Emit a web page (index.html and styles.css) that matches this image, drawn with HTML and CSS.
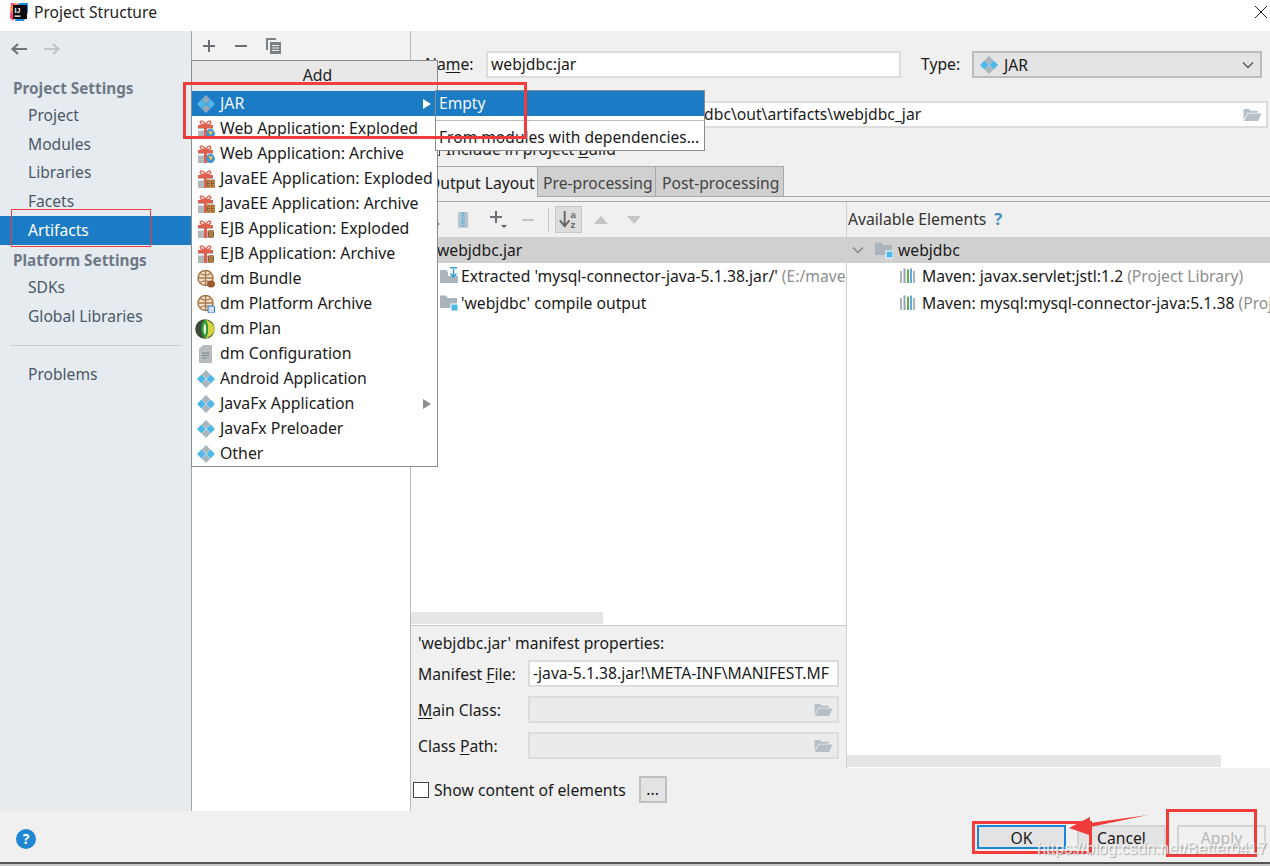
FILE: index.html
```html
<!DOCTYPE html>
<html lang="en">
<head>
<meta charset="utf-8">
<title>Project Structure</title>
<link rel="stylesheet" href="styles.css">
</head>
<body>
<svg class="sprite" aria-hidden="true">
  <symbol id="i-diamond" viewBox="0 0 18 18">
    <path d="M9 0l4.400 4.400L9 8.800 4.600 4.400z" fill="#a9b5bd"/><path d="M9 9.200l4.400 4.400L9 18l-4.400-4.400z" fill="#a9b5bd"/>
    <path d="M4.400 4.600L8.800 9l-4.400 4.400L0 9z" fill="#4fb8e8"/><path d="M13.600 4.600L18 9l-4.400 4.400L9.200 9z" fill="#4fb8e8"/>
  </symbol>
  <symbol id="i-diamond-sel" viewBox="0 0 18 18">
    <path d="M9 0l4.400 4.400L9 8.800 4.600 4.400z" fill="#8fa9bb"/><path d="M9 9.200l4.400 4.400L9 18l-4.400-4.400z" fill="#8fa9bb"/>
    <path d="M4.400 4.600L8.800 9l-4.400 4.400L0 9z" fill="#4fb8e8"/><path d="M13.600 4.600L18 9l-4.400 4.400L9.200 9z" fill="#4fb8e8"/>
  </symbol>
  <symbol id="i-gift" viewBox="0 0 18 18">
    <rect x="1" y="5" width="15" height="13" fill="#b3b7ba"/>
    <rect x="1" y="9" width="15" height="1.500" fill="#fff"/>
    <rect x="7" y="5" width="3" height="13" fill="#e0604f"/>
    <rect x="1" y="5" width="15" height="3" fill="#e0604f"/>
    <path d="M8.500 4.500C6.500 .3 3.200 .3 3.200 2.500S6.500 4.500 8.500 4.500zM8.500 4.500c2-4.200 5.300-4.200 5.300-2s-3.300 2-5.300 2z" fill="none" stroke="#e0604f" stroke-width="1.400"/>
  </symbol>
  <symbol id="i-web" viewBox="0 0 18 18">
    <use href="#i-gift"/><circle cx="13.500" cy="13.500" r="4.400" fill="#3f93d2"/><path d="M11.300 11.300h4.400l-1 2.700-1.700 1.200-.6-2.200z" fill="#f2c94c"/>
  </symbol>
  <symbol id="i-ee" viewBox="0 0 18 18">
    <use href="#i-gift"/><rect x="9" y="9.500" width="9" height="8.500" fill="#c98d4d"/>
    <path d="M10 11h3M10 13.500h3M10 16h3M10 11v5M14.500 11h3M14.500 13.500h3M14.500 16h3M14.500 11v5" stroke="#7a5228" stroke-width=".9" fill="none"/>
  </symbol>
  <symbol id="i-ejb" viewBox="0 0 18 18">
    <use href="#i-gift"/><rect x="11" y="10" width="6" height="8" rx="2" fill="#8a5a2c"/><path d="M13 10v8M15 10v8" stroke="#d8b078" stroke-width=".8"/>
  </symbol>
  <symbol id="i-globe" viewBox="0 0 18 18">
    <circle cx="8.500" cy="8" r="7.500" fill="#f0e2cd" stroke="#a9784a" stroke-width="1.500"/>
    <path d="M1 8h15M8.500 .5v15M3 3.500c3.500 2 7.500 2 11 0M3 12.500c3.500-2 7.500-2 11 0" stroke="#a9784a" stroke-width="1.300" fill="none"/>
  </symbol>
  <symbol id="i-bundle" viewBox="0 0 18 18">
    <use href="#i-globe"/><ellipse cx="14" cy="14" rx="4" ry="3.500" fill="#9a5a2c"/>
  </symbol>
  <symbol id="i-platform" viewBox="0 0 18 18">
    <use href="#i-globe"/><rect x="11" y="11" width="6.500" height="7" rx="1" fill="#cfe3f7" stroke="#2f6fc0"/>
  </symbol>
  <symbol id="i-plan" viewBox="0 0 20 20">
    <circle cx="10" cy="10" r="9.800" fill="#3d4a33"/>
    <path d="M10 .2C15 2 19.800 6 19.800 10S15 18 10 19.800C14 15 14 5 10 .2z" fill="#d4d43c"/>
    <path d="M10 .2C5 4 5 15 10 19.800C14 15 14 5 10 .2z" fill="#2f9a3a"/>
    <path d="M10 4C8 7 8 13 10 16c1.500-3 1.500-9 0-12z" fill="#e8f5d8"/>
  </symbol>
  <symbol id="i-doc" viewBox="0 0 18 18">
    <path d="M6 0h9v18H2V4z" fill="#b6bcc0"/><path d="M5 8h7M5 10.500h7M5 13h5" stroke="#7d8488" stroke-width="1"/>
  </symbol>
  <symbol id="i-folder-blue" viewBox="0 0 18 18">
    <path d="M0 1.500h6l2 2.500h9v10H0z" fill="#a9b4bc"/><rect x="11" y="10" width="7" height="7" fill="#4db8e8" stroke="#fff"/>
  </symbol>
  <symbol id="i-extract" viewBox="0 0 18 18">
    <path d="M0 3h6l2 2h10v11H0z" fill="#a9b4bc"/><rect x="8" y="0" width="10" height="9" fill="#fff"/>
    <path d="M10 .8h7M13.500 2v8M10.500 6.500l3 3.500 3-3.500" stroke="#3a9bd8" stroke-width="1.500" fill="none"/>
  </symbol>
  <symbol id="i-open" viewBox="0 0 20 16">
    <path d="M1 2h6l1.500 2H16v2H5L1 14z" fill="#b5bfc5"/><path d="M5.500 7H20l-3.500 8H1.500z" fill="#b5bfc5"/>
  </symbol>
  <symbol id="i-lib" viewBox="0 0 18 18">
    <path d="M1 4h2v12H1zM14 4h2v12h-2z" fill="#a9b4bc"/><path d="M4.500 1.500h2V16h-2z" fill="#8fa3b0"/><path d="M8 2.500h2V16H8z" fill="#6aa84f"/><path d="M11 1.500h2V16h-2z" fill="#62a9d8"/>
  </symbol>
</svg>

<header class="titlebar">
  <svg class="logo" viewBox="0 0 20 20" aria-hidden="true">
    <path d="M2 1l8 1-6 17-3-3z" fill="#fc3a6b"/><path d="M10 1h9v9l-4 9H6z" fill="#1f8be0"/><path d="M1 5l6-4 6 9-8 6z" fill="#f9903a"/>
    <rect x="4" y="3" width="14" height="14" fill="#0a0a0a"/>
    <text x="5.500" y="10.500" class="logo-text">IJ</text><rect x="5.500" y="13.500" width="6" height="1.300" fill="#fff"/>
  </svg>
  <span class="title">Project Structure</span>
  <svg class="close" viewBox="0 0 14 14" aria-hidden="true"><path d="M1 1l12 12M13 1L1 13" stroke="#222" stroke-width="1" fill="none"/></svg>
</header>

<main class="main">
  <nav class="sidebar">
    <div class="nav-arrows">
      <svg class="nav-arrow" viewBox="0 0 18 14" aria-hidden="true"><path d="M17 7H3M8 2L2.500 7 8 12" stroke="#6f7479" stroke-width="2.200" fill="none"/></svg>
      <svg class="nav-arrow" viewBox="0 0 18 14" aria-hidden="true"><path d="M1 7h14M10 2l5.500 5L10 12" stroke="#c0c5c9" stroke-width="2.200" fill="none"/></svg>
    </div>
    <div class="nav-head">Project Settings</div>
    <div class="nav-item">Project</div>
    <div class="nav-item">Modules</div>
    <div class="nav-item">Libraries</div>
    <div class="nav-item">Facets</div>
    <div class="nav-item selected">Artifacts</div>
    <div class="nav-head">Platform Settings</div>
    <div class="nav-item">SDKs</div>
    <div class="nav-item">Global Libraries</div>
    <div class="nav-sep"></div>
    <div class="nav-item">Problems</div>
    <svg class="help-round" viewBox="0 0 20 20" aria-hidden="true"><circle cx="10" cy="10" r="10" fill="#1f86d1"/><text x="10" y="15" class="help-text">?</text></svg>
  </nav>

  <section class="list-col">
    <div class="list-tools">
      <svg class="tool" viewBox="0 0 16 16" aria-hidden="true"><path d="M8 2v12M2 8h12" stroke="#6b6f73" stroke-width="2"/></svg>
      <svg class="tool" viewBox="0 0 16 16" aria-hidden="true"><path d="M2 8h12" stroke="#6b6f73" stroke-width="2"/></svg>
      <svg class="tool" viewBox="0 0 16 16" aria-hidden="true"><path d="M1 0h10v2H3v10H1z" fill="#7b8084"/><path d="M5 4h11v12H5z" fill="#7b8084"/><path d="M7 7.500h7M7 10h7M7 12.500h7" stroke="#e8e8e8"/></svg>
    </div>
  </section>

  <section class="detail">
    <div class="form">
      <div class="form-row">
        <label class="form-label">Na<u>m</u>e:</label>
        <div class="field name-field">webjdbc:jar</div>
        <label class="type-label">Type:</label>
        <div class="combo"><svg class="combo-icon"><use href="#i-diamond"/></svg><span class="combo-text">JAR</span>
          <svg class="chev" viewBox="0 0 12 8" aria-hidden="true"><path d="M1 1.500l5 5 5-5" stroke="#555" stroke-width="1.300" fill="none"/></svg></div>
      </div>
      <div class="form-row output-row">
        <label class="form-label">Output directory:</label>
        <div class="field output-field"><span class="output-text">E:\IdeaProjects\javaweb\webjdbc\out\artifacts\webjdbc_jar</span><svg class="open"><use href="#i-open"/></svg></div>
      </div>
      <div class="include-row"><span class="check small"></span><span>Include in project <u>B</u>uild</span></div>
    </div>

    <div class="tabs">
      <div class="tab active">Output Layout</div>
      <div class="tab">Pre-processing</div>
      <div class="tab">Post-processing</div>
    </div>

    <div class="panes">
      <div class="pane left-pane">
        <div class="pane-tools">
          <svg class="t-hidden" viewBox="0 0 12 12" aria-hidden="true"><path d="M2 2h6v6H2z" fill="#8a8f93"/><rect x="9" y="9" width="2" height="2" fill="#555"/></svg>
          <svg class="t-zip" viewBox="0 0 14 20" aria-hidden="true"><rect x="1" y="1" width="12" height="18" fill="#bcc4c9"/><path d="M7 1v18" stroke="#5fb5e0" stroke-width="4" stroke-dasharray="2 1"/></svg>
          <svg class="t-plus" viewBox="0 0 20 20" aria-hidden="true"><path d="M7 1v12M1 7h12" stroke="#6b6f73" stroke-width="2"/><path d="M12 15h6l-3 3z" fill="#555"/></svg>
          <svg class="t-minus" viewBox="0 0 14 14" aria-hidden="true"><path d="M1 7h12" stroke="#c4c4c4" stroke-width="2"/></svg>
          <span class="t-sep"></span>
          <span class="t-sort"><svg viewBox="0 0 24 24" aria-hidden="true"><path d="M8 3v15M3 13l5 6 5-6" stroke="#666" stroke-width="2" fill="none"/><text x="14" y="10" class="sort-a">a</text><text x="14" y="21" class="sort-a">z</text></svg></span>
          <svg class="t-tri up" viewBox="0 0 14 8" aria-hidden="true"><path d="M0 8l7-8 7 8z" fill="#c4c4c4"/></svg>
          <svg class="t-tri" viewBox="0 0 14 8" aria-hidden="true"><path d="M0 0l7 8 7-8z" fill="#c4c4c4"/></svg>
        </div>
        <div class="tree left-tree">
          <div class="tree-row head"><span class="root-name">webjdbc.jar</span></div>
          <div class="tree-row l-row"><svg class="t-icon"><use href="#i-extract"/></svg><span class="row-text">Extracted 'mysql-connector-java-5.1.38.jar/'</span> <span class="muted">(E:/maven/repository/mysql)</span></div>
          <div class="tree-row l-row"><svg class="t-icon"><use href="#i-folder-blue"/></svg><span class="row-text">'webjdbc' compile output</span></div>
        </div>
        <div class="hscroll"><div class="thumb left-thumb"></div></div>
        <div class="manifest">
          <div class="manifest-title">'webjdbc.jar' manifest properties:</div>
          <div class="m-row"><label>Manifest <u>F</u>ile:</label><div class="field m-field">-java-5.1.38.jar!\META-INF\MANIFEST.MF</div></div>
          <div class="m-row"><label><u>M</u>ain Class:</label><div class="field m-field off"><svg class="open"><use href="#i-open"/></svg></div></div>
          <div class="m-row"><label>Class <u>P</u>ath:</label><div class="field m-field off"><svg class="open"><use href="#i-open"/></svg></div></div>
        </div>
      </div>
      <div class="pane right-pane">
        <div class="pane-tools avail">Available Elements <span class="q">?</span></div>
        <div class="tree right-tree">
          <div class="tree-row head r-head"><svg class="tw" viewBox="0 0 12 8" aria-hidden="true"><path d="M1 1.500l5 5 5-5" stroke="#888" stroke-width="1.500" fill="none"/></svg><svg class="t-icon"><use href="#i-folder-blue"/></svg><span>webjdbc</span></div>
          <div class="tree-row r-row"><svg class="t-icon"><use href="#i-lib"/></svg><span class="row-text">Maven: javax.servlet:jstl:1.2</span> <span class="muted">(Project Library)</span></div>
          <div class="tree-row r-row"><svg class="t-icon"><use href="#i-lib"/></svg><span class="row-text">Maven: mysql:mysql-connector-java:5.1.38</span> <span class="muted">(Project Library)</span></div>
        </div>
        <div class="hscroll"><div class="thumb right-thumb"></div></div>
      </div>
    </div>

    <div class="show-row">
      <span class="check"></span><span class="show-label">Show content of elements</span>
      <span class="dots">...</span>
    </div>
  </section>
</main>

<footer class="footer">
  <div class="btn ok">OK</div>
  <div class="btn">Cancel</div>
  <div class="btn disabled">Apply</div>
</footer>
<div class="bottom-edge"></div>

<div class="popup">
  <div class="popup-head">Add</div>
  <div class="menu-item sel"><svg class="m-icon"><use href="#i-diamond-sel"/></svg>JAR<span class="tri white"></span></div>
  <div class="menu-item"><svg class="m-icon"><use href="#i-web"/></svg>Web Application: Exploded</div>
  <div class="menu-item"><svg class="m-icon"><use href="#i-web"/></svg>Web Application: Archive</div>
  <div class="menu-item"><svg class="m-icon"><use href="#i-ee"/></svg>JavaEE Application: Exploded</div>
  <div class="menu-item"><svg class="m-icon"><use href="#i-ee"/></svg>JavaEE Application: Archive</div>
  <div class="menu-item"><svg class="m-icon"><use href="#i-ejb"/></svg>EJB Application: Exploded</div>
  <div class="menu-item"><svg class="m-icon"><use href="#i-ejb"/></svg>EJB Application: Archive</div>
  <div class="menu-item"><svg class="m-icon"><use href="#i-bundle"/></svg>dm Bundle</div>
  <div class="menu-item"><svg class="m-icon"><use href="#i-platform"/></svg>dm Platform Archive</div>
  <div class="menu-item"><svg class="m-icon large"><use href="#i-plan"/></svg>dm Plan</div>
  <div class="menu-item"><svg class="m-icon"><use href="#i-doc"/></svg>dm Configuration</div>
  <div class="menu-item"><svg class="m-icon"><use href="#i-diamond"/></svg>Android Application</div>
  <div class="menu-item"><svg class="m-icon"><use href="#i-diamond"/></svg>JavaFx Application<span class="tri"></span></div>
  <div class="menu-item"><svg class="m-icon"><use href="#i-diamond"/></svg>JavaFx Preloader</div>
  <div class="menu-item"><svg class="m-icon"><use href="#i-diamond"/></svg>Other</div>
</div>

<div class="submenu">
  <div class="sub-item sel">Empty</div>
  <div class="sub-sep"></div>
  <div class="sub-item">From modules with dependencies...</div>
</div>

<div class="mark mark-jar"></div>
<div class="mark mark-artifacts"></div>
<div class="mark mark-ok"></div>
<div class="mark mark-apply"></div>
<svg class="mark-arrow" viewBox="0 0 80 24" aria-hidden="true"><path d="M79 1L21 13l2 9L0 14l21-11 0 6z" fill="#f23c3c"/></svg>
<div class="watermark">https://blog.csdn.net/Better0417</div>
</body>
</html>
```
FILE: styles.css
```css
* { box-sizing: border-box; }
html, body { margin: 0; padding: 0; }
body {
  width: 1270px; height: 866px; overflow: hidden; position: relative;
  display: flex; flex-direction: column;
  font: 15.7px/20px "Noto Sans", sans-serif; color: #1a1a1a; background: #f0f0f0;
}
u { text-underline-offset: 2px; }
.sprite { display: none; }

.titlebar { height: 31px; flex: none; background: #fff; display: flex; align-items: center; position: relative; padding: 0 0 8px 9px; }
.logo { width: 20px; height: 20px; margin-right: 5px; }
.logo-text { font: bold 7px "Liberation Sans", sans-serif; fill: #fff; }
.title { font-size: 15.6px; color: #222; }
.close { position: absolute; right: 2px; top: 5px; width: 14px; height: 14px; }

.main { height: 780px; flex: none; display: flex; }

.sidebar { width: 192px; flex: none; background: #e6ebf0; border-right: 1px solid #a6a6a6; position: relative; color: #4a5866; font-size: 15.6px; }
.nav-arrows { height: 47px; padding: 11px 0 0 10px; display: flex; gap: 15px; }
.nav-arrow { width: 18px; height: 14px; }
.nav-head { height: 22px; line-height: 20px; padding-left: 13px; font-weight: 700; font-size: 15.3px; color: #6d7986; }
.nav-item { height: 28.6px; line-height: 28px; padding-left: 28px; }
.nav-item.selected { background: #1b7bc4; color: #fff; margin-top: .6px; margin-bottom: 5.900px; }
.nav-sep { height: 1px; margin: 14px 10px; background: #c8ccd0; }
.sidebar .nav-head + .nav-item { margin-top: 1px; }
.help-round { position: absolute; left: 16px; top: 798px; width: 20px; height: 20px; }
.help-text { font: bold 14px "Noto Sans", sans-serif; fill: #fff; text-anchor: middle; }

.list-col { width: 219px; flex: none; background: #fff; border-right: 1px solid #b8b8b8; }
.list-tools { height: 29px; background: #f2f2f2; display: flex; align-items: center; gap: 16px; padding: 0 0 0 9px; }
.tool { width: 16px; height: 16px; }

.detail { flex: 1; min-width: 0; display: flex; flex-direction: column; background: #f0f0f0; }
.form { height: 135px; flex: none; padding: 20px 2px 0 14px; }
.form-row { display: flex; align-items: center; height: 27px; }
.form-label { width: 61px; flex: none; white-space: nowrap; overflow: hidden; padding-bottom: 1px; }
.field { background: #fff; border: 2px solid #dcdcdc; height: 27px; line-height: 23px; padding: 0 3px; white-space: nowrap; overflow: hidden; position: relative; }
.name-field { width: 415px; flex: none; }
.type-label { margin-left: 20px; width: 51px; flex: none; padding-bottom: 1px; }
.combo { width: 290px; height: 27px; flex: none; background: #e3e3e3; border: 2px solid #bcbcbc; display: flex; align-items: center; padding: 0 6px; }
.combo-icon { width: 18px; height: 18px; margin-right: 6px; }
.combo-text { flex: 1; }
.chev { width: 12px; height: 8px; }
.output-row { margin-top: 23px; }
.output-field { flex: 1; }
.output-text { display: inline-block; margin-left: -4px; }
.open { position: absolute; right: 4px; top: 4px; width: 20px; height: 15px; }
.include-row { margin-top: 11px; height: 20px; padding-left: 2px; display: flex; align-items: center; gap: 6px; }
.check { width: 16px; height: 16px; background: #fff; border: 1px solid #444; flex: none; display: block; }
.check.small { width: 13px; height: 13px; }

.tabs { height: 31px; flex: none; display: flex; border-bottom: 1px solid #a8a8a8; padding-left: 9px; }
.tab { padding: 1px 6px 0 5px; height: 31px; line-height: 30px; background: #d0d0d0; border: 1px solid #a8a8a8; border-left-width: 0; color: #444; width: 118px; white-space: nowrap; overflow: hidden; }
.tab:nth-child(3) { width: 128px; padding-left: 6px; }
.tab.active { background: #f0f0f0; color: #1a1a1a; border-bottom: 0; width: 118px; padding-left: 8px; }

.panes { height: 567px; flex: none; margin-top: 4px; display: flex; border-top: 1px solid #a8a8a8; }
.pane { display: flex; flex-direction: column; min-width: 0; }
.left-pane { width: 436px; flex: none; border-right: 1px solid #d0d0d0; }
.right-pane { flex: 1; }
.pane-tools { height: 35px; flex: none; display: flex; align-items: center; }
.left-pane .pane-tools { padding-left: 17px; }
.t-hidden { width: 12px; height: 12px; margin-right: 17px; }
.t-zip { width: 12px; height: 20px; margin-right: 20px; }
.t-plus { width: 20px; height: 20px; margin-right: 12px; }
.t-minus { width: 14px; height: 14px; margin-right: 13px; }
.t-sep { width: 1px; height: 24px; background: #c8c8c8; margin-right: 6px; }
.t-sort { width: 27px; height: 27px; background: #dcdcdc; border: 1px solid #c8c8c8; padding: 1px; margin-right: 12px; display: block; }
.t-sort svg { display: block; width: 23px; height: 23px; }
.sort-a { font: bold 10px "Liberation Sans", sans-serif; fill: #666; }
.t-tri { width: 14px; height: 8px; }
.t-tri.up { margin-right: 19px; }
.avail { padding: 0 0 2px 1px; color: #333; }
.q { color: #3f93c8; font-weight: 700; margin-left: 8px; font-size: 16.5px; }

.tree { flex: 1; background: #fff; min-height: 0; overflow: hidden; }
.tree-row { height: 27px; line-height: 26px; display: flex; align-items: center; white-space: nowrap; overflow: hidden; }
.tree-row.head { height: 26px; background: #d0d0d0; }
.root-name { margin-left: 26px; }
.t-icon { width: 18px; height: 18px; flex: none; margin-right: 3px; }
.l-row { padding: 0 0 2px 29px; }
.r-head { padding-left: 5px; }
.r-head .t-icon { margin-right: 5px; }
.tw { width: 12px; height: 8px; margin-right: 11px; }
.r-row { padding: 0 0 2px 52px; }
.r-row .t-icon { margin-right: 5px; }
.muted { color: #8e8e8e; margin-left: 4px; }

.hscroll { height: 13px; flex: none; background: #fff; }
.thumb { height: 12px; background: #e6e6e6; }
.left-thumb { width: 192px; }
.right-thumb { width: 374px; }

.manifest { height: 143px; flex: none; background: #f0f0f0; border-top: 1px solid #c8c8c8; padding: 7px 7px 0 7px; }
.manifest-title { height: 27px; line-height: 20px; }
.m-row { display: flex; align-items: center; height: 27px; margin-bottom: 9px; }
.m-row label { width: 110px; flex: none; }
.m-field { width: 311px; flex: none; }
.m-field.off { background: #ebebeb; }

.show-row { flex: 1; display: flex; align-items: center; padding-left: 2px; }
.show-label { margin-left: 5px; }
.dots { width: 28px; height: 27px; margin-left: 13px; background: #e3e3e3; border: 2px solid #c0c0c0; text-align: center; line-height: 22px; }

.footer { height: 51px; flex: none; display: flex; justify-content: flex-end; gap: 11px; padding: 14px 4px 0 0; background: #f0f0f0; }
.btn { width: 89px; height: 24px; border: 2px solid #d4d4d4; background: #e3e3e3; text-align: center; line-height: 22px; }
.btn.ok { border-color: #1a85dc; }
.btn.disabled { background: #f0f0f0; color: #b8b8b8; }
.bottom-edge { height: 4px; flex: none; background: #c8c8c8; border-top: 2px solid #555; }

.popup { position: absolute; left: 191px; top: 60px; width: 247px; height: 407px; background: #fff; border: 1px solid #8c8c8c; font-size: 15.85px; }
.popup-head { height: 30px; background: #e8e8e8; text-align: center; line-height: 28px; color: #222; padding-left: 6px; }
.menu-item { height: 25px; line-height: 25px; display: flex; align-items: center; position: relative; white-space: nowrap; color: #1a1a1a; }
.m-icon { width: 18px; height: 18px; margin: 0 5px; flex: none; }
.m-icon.large { width: 20px; height: 20px; margin: 0 5px 0 3px; }
.sel { background: #1b7bc4; color: #f4f8fb; }
.tri { position: absolute; right: 6px; top: 8px; border-left: 8px solid #8c8c8c; border-top: 5px solid transparent; border-bottom: 5px solid transparent; }
.tri.white { border-left-color: #fff; }

.submenu { position: absolute; left: 435px; top: 90px; width: 270px; height: 61px; background: #fff; border: 1px solid #8c8c8c; font-size: 15.6px; }
.sub-item { height: 25px; line-height: 25px; padding-left: 3px; white-space: nowrap; }
.sub-sep { height: 1px; margin-top: 4px; margin-bottom: 4px; background: #bdbdbd; }

.mark { position: absolute; border: 3px solid #f23c3c; pointer-events: none; }
.mark-jar { left: 183px; top: 82px; width: 344px; height: 57px; }
.mark-artifacts { left: 11px; top: 209px; width: 140px; height: 38px; border-width: 1px; }
.mark-ok { left: 972px; top: 821px; width: 120px; height: 33px; }
.mark-apply { left: 1166px; top: 809px; width: 91px; height: 48px; }
.mark-arrow { position: absolute; left: 1069px; top: 814px; width: 80px; height: 24px; }
.watermark { position: absolute; left: 1037px; top: 838px; font: 16.3px/20px "Liberation Sans", sans-serif; color: rgba(255,255,255,.8); text-shadow: 1px 1px 1px rgba(110,110,110,.55); white-space: nowrap; }
```
